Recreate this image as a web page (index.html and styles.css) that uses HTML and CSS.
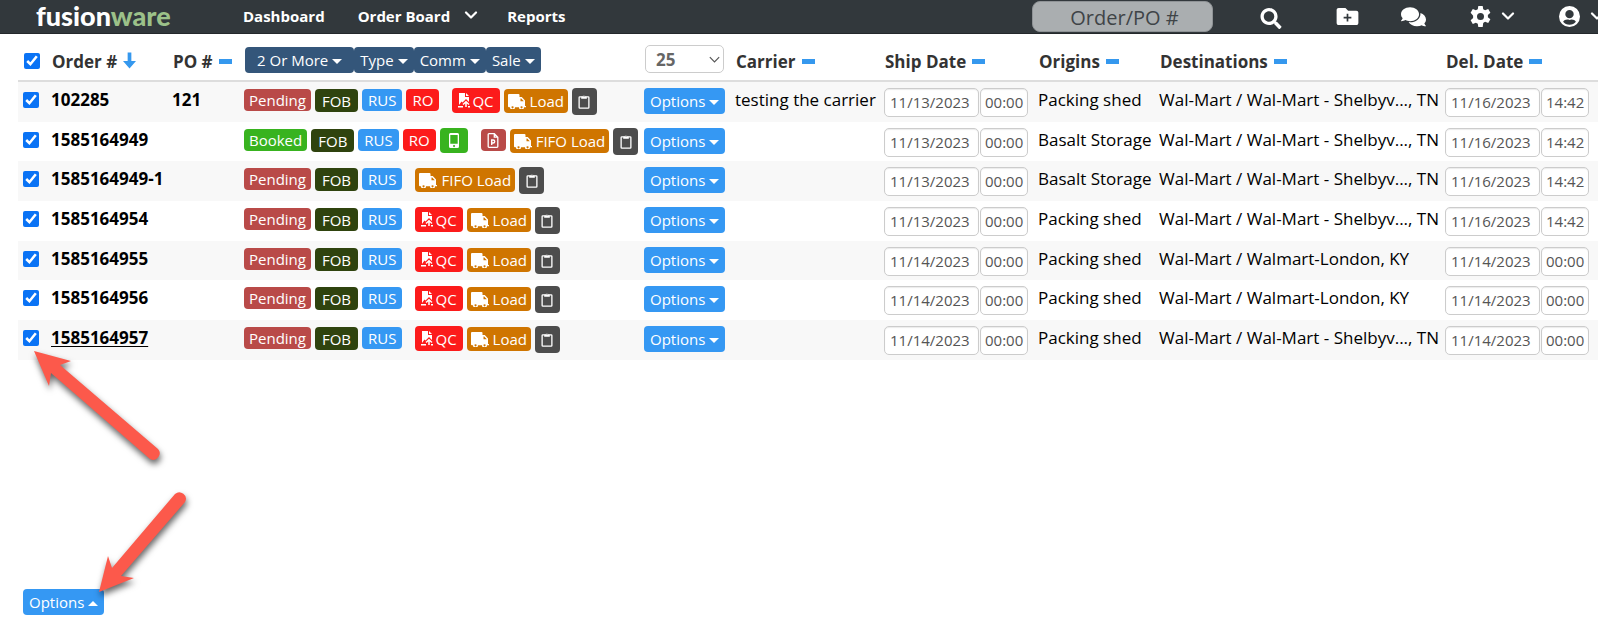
FILE: index.html
```html
<!DOCTYPE html>
<html lang="en">
<head>
<meta charset="utf-8">
<title>Fusionware Order Board</title>
<link rel="stylesheet" href="styles.css">
</head>
<body>
<svg class="sprite" aria-hidden="true">
  <symbol id="i-chev" viewBox="0 0 14 9"><path d="M2 1.500 7 6.500l5-5" fill="none" stroke="currentColor" stroke-width="2.200" stroke-linecap="round" stroke-linejoin="round"/></symbol>
  <symbol id="i-thin" viewBox="0 0 14 9"><path d="M1 1.500 7 7.500l6-6" fill="none" stroke="currentColor" stroke-width="1.500"/></symbol>
  <symbol id="i-search" viewBox="0 0 512 512"><path fill="currentColor" d="M505 442.700 405.300 343c-4.500-4.500-10.600-7-17-7H372c27.600-35.300 44-79.700 44-128C416 93.100 322.900 0 208 0S0 93.100 0 208s93.100 208 208 208c48.300 0 92.700-16.400 128-44v16.300c0 6.400 2.500 12.500 7 17l99.700 99.700c9.400 9.400 24.600 9.400 33.900 0l28.300-28.300c9.400-9.400 9.400-24.600.1-34zM208 336c-70.700 0-128-57.200-128-128 0-70.700 57.200-128 128-128 70.700 0 128 57.200 128 128 0 70.700-57.200 128-128 128z"/></symbol>
  <symbol id="i-folder" viewBox="0 0 512 400"><path fill="currentColor" fill-rule="evenodd" d="M464 64H272L208 0H48C21 0 0 21 0 48v304c0 27 21 48 48 48h416c27 0 48-21 48-48V112c0-27-21-48-48-48zM236 135h40v71h71v40h-71v71h-40v-71h-71v-40h71z"/></symbol>
  <symbol id="i-chat" viewBox="0 0 576 448"><path fill="currentColor" d="M416 160C416 71.600 322.900 0 208 0S0 71.600 0 160c0 34.300 14.100 65.900 38 92-13.400 30.200-35.500 54.200-35.800 54.500-2.200 2.300-2.800 5.700-1.500 8.700S4.800 320 8 320c36.600 0 66.900-12.300 88.700-25 32.200 15.700 70.300 25 111.300 25 114.900 0 208-71.600 208-160z"/><path fill="currentColor" d="M447 140c.8 6 1 13 1 20 0 106-108 192-240 192-11 0-21-1-32-2 31 58 105 98 192 98 41 0 80-9 111-25 22 13 52 25 89 25 8 0 9-8 6-12-8-10-24-26-36-54 24-26 38-58 38-92 0-67-53-124-129-150z" transform="translate(0 -8)"/></symbol>
  <symbol id="i-cog" viewBox="0 0 24 24"><path fill="currentColor" fill-rule="evenodd" d="M9.500 0h5l.6 3.700c.8.300 1.500.7 2.200 1.200l3.500-1.400 2.500 4.300-2.900 2.400a9 9 0 0 1 0 2.600l2.900 2.400-2.500 4.300-3.500-1.400c-.7.500-1.400.9-2.200 1.200L14.500 24h-5l-.6-3.700c-.8-.3-1.500-.7-2.200-1.200l-3.500 1.400-2.500-4.300 2.900-2.400a9 9 0 0 1 0-2.600L.7 7.800l2.500-4.300 3.500 1.400c.7-.5 1.400-.9 2.200-1.200zM12 8a4 4 0 1 0 0 8 4 4 0 0 0 0-8z"/></symbol>
  <symbol id="i-user" viewBox="0 0 24 24"><path fill="currentColor" fill-rule="evenodd" d="M12 0a12 12 0 1 0 0 24 12 12 0 0 0 0-24zm0 4.500a4.800 4.800 0 1 1 0 9.600 4.800 4.800 0 0 1 0-9.600zM12 21.500c-3 0-5.600-1.300-7.300-3.400 1-1.800 2.800-2.700 4.700-2.700.9 0 1.300.5 2.600.5s1.700-.5 2.600-.5c1.900 0 3.700.9 4.700 2.700-1.700 2.100-4.300 3.400-7.300 3.400z"/></symbol>
  <symbol id="i-down" viewBox="0 0 14 17"><path fill="currentColor" d="M5 0h4v9h5L7 17 0 9h5z"/></symbol>
  <symbol id="i-truck" viewBox="0 0 18 15"><path fill="currentColor" fill-rule="evenodd" d="M1 0h9.500q1 0 1 1v2h2.300L17 6.600V12h1v1.200h-2a2.500 2.500 0 0 1-5 0H7a2.500 2.500 0 0 1-5 0H1q-1 0-1-1V1q0-1 1-1zM12.500 4.400v2.900h3.300l-2.600-2.900z"/><path d="M4.500 12.200a1 1 0 1 0 .1 0zM13.500 12.200a1 1 0 1 0 .1 0z" fill="#cf7500"/></symbol>
  <symbol id="i-clip" viewBox="0 0 12 16"><path fill="none" stroke="currentColor" stroke-width="1.400" d="M3.500 3H1.500q-.7 0-.7.700v10.600q0 .8.700.8h9q.7 0 .7-.8V3.700q0-.7-.7-.7h-2"/><path fill="currentColor" fill-rule="evenodd" d="M3 5V2.500h1.500a1.600 1.600 0 0 1 3 0H9V5zM6 1.300a.7.700 0 1 0 .1 0z"/></symbol>
  <symbol id="i-qc" viewBox="0 0 12 15"><path fill="currentColor" d="M1 0h6v4h4v5L8 6 4.500 9.500 3.500 8.500 1 12zM8 0l3 3H8z"/><path fill="none" stroke="currentColor" stroke-width="1.500" d="M5 11.500 8 8.800l3 2.700M8 9.500V14"/><path fill="currentColor" d="M0 13h5v1.500H0zM10 13h2v1.500h-2z"/></symbol>
  <symbol id="i-phone" viewBox="0 0 10 15"><path fill="currentColor" fill-rule="evenodd" d="M1.500 0h7Q10 0 10 1.500v12Q10 15 8.500 15h-7Q0 15 0 13.500v-12Q0 0 1.500 0zM1.300 2v8.800h7.400V2zM5 12a1 1 0 1 0 .1 0z"/></symbol>
  <symbol id="i-pdf" viewBox="0 0 11 15"><path fill="none" stroke="currentColor" stroke-width="1.300" d="M.7 1.500q0-.8.800-.8h5.300l3.500 3.500v9.300q0 .8-.8.800h-8q-.8 0-.8-.8zM6.800.7v3.500h3.500"/><path fill="none" stroke="currentColor" stroke-width="1.400" d="M4.200 12V7h1.500a1.400 1.400 0 0 1 0 3H4.200"/></symbol>
</svg>

<header class="topbar">
  <a class="logo" href="#">fusion<span class="logo-alt">ware</span></a>
  <nav class="nav">
    <a href="#">Dashboard</a>
    <a href="#" class="nav-menu">Order Board <svg class="chev"><use href="#i-chev"/></svg></a>
    <a href="#">Reports</a>
  </nav>
  <input class="search" type="text" aria-label="Order or PO number" placeholder="Order/PO #">
  <div class="tools">
    <button aria-label="Search"><svg class="ic ic-search"><use href="#i-search"/></svg></button>
    <button aria-label="New folder"><svg class="ic ic-folder"><use href="#i-folder"/></svg></button>
    <button aria-label="Messages"><svg class="ic ic-chat"><use href="#i-chat"/></svg></button>
    <button aria-label="Settings"><svg class="ic ic-cog"><use href="#i-cog"/></svg><svg class="chev"><use href="#i-chev"/></svg></button>
    <button aria-label="Account"><svg class="ic ic-user"><use href="#i-user"/></svg><svg class="chev"><use href="#i-chev"/></svg></button>
  </div>
</header>

<main class="board">
<table class="orders">
  <colgroup><col class="c-check"><col class="c-order"><col class="c-po"><col class="c-tags"><col class="c-opts"><col class="c-carrier"><col class="c-ship"><col class="c-orig"><col class="c-dest"><col class="c-del"></colgroup>
  <thead>
    <tr>
      <th><input type="checkbox" checked aria-label="Select all orders"></th>
      <th><span class="head">Order # <svg class="sort-down"><use href="#i-down"/></svg></span></th>
      <th><span class="head">PO # <i class="dash"></i></span></th>
      <th><div class="filters"><button class="filter filter-wide">2 Or More<i class="caret"></i></button><button class="filter">Type<i class="caret"></i></button><button class="filter">Comm<i class="caret"></i></button><button class="filter">Sale<i class="caret"></i></button></div></th>
      <th><span class="pick"><select aria-label="Rows per page"><option>25</option></select><svg class="pick-chev"><use href="#i-thin"/></svg></span></th>
      <th><span class="head">Carrier <i class="dash"></i></span></th>
      <th><span class="head">Ship Date <i class="dash"></i></span></th>
      <th><span class="head">Origins <i class="dash"></i></span></th>
      <th><span class="head">Destinations <i class="dash"></i></span></th>
      <th><span class="head">Del. Date <i class="dash"></i></span></th>
    </tr>
  </thead>
  <tbody>
    <tr>
      <td><input type="checkbox" checked aria-label="Select 102285"></td>
      <td><a class="num" href="#">102285</a></td>
      <td><b class="num">121</b></td>
      <td><div class="tags"><span class="tag red">Pending</span><span class="tag fob">FOB</span><span class="tag blue">RUS</span><span class="tag hot">RO</span><button class="tag hot qc lead"><svg><use href="#i-qc"/></svg>QC</button><button class="tag load"><svg><use href="#i-truck"/></svg>Load</button><button class="tag clip" aria-label="Clipboard"><svg><use href="#i-clip"/></svg></button></div></td>
      <td><button class="options">Options<i class="caret"></i></button></td>
      <td><span class="txt">testing the carrier</span></td>
      <td><div class="when"><input class="date" aria-label="Ship date" value="11/13/2023"><input class="time" aria-label="Ship time" value="00:00"></div></td>
      <td><span class="txt">Packing shed</span></td>
      <td><span class="txt">Wal-Mart / Wal-Mart - Shelbyv..., TN</span></td>
      <td><div class="when"><input class="date" aria-label="Delivery date" value="11/16/2023"><input class="time" aria-label="Delivery time" value="14:42"></div></td>
    </tr>
    <tr>
      <td><input type="checkbox" checked aria-label="Select 1585164949"></td>
      <td><a class="num" href="#">1585164949</a></td>
      <td></td>
      <td><div class="tags"><span class="tag green">Booked</span><span class="tag fob">FOB</span><span class="tag blue">RUS</span><span class="tag hot">RO</span><button class="tag green phone" aria-label="Mobile"><svg><use href="#i-phone"/></svg></button><button class="tag red pdf lead" aria-label="PDF"><svg><use href="#i-pdf"/></svg></button><button class="tag load"><svg><use href="#i-truck"/></svg>FIFO Load</button><button class="tag clip" aria-label="Clipboard"><svg><use href="#i-clip"/></svg></button></div></td>
      <td><button class="options">Options<i class="caret"></i></button></td>
      <td></td>
      <td><div class="when"><input class="date" aria-label="Ship date" value="11/13/2023"><input class="time" aria-label="Ship time" value="00:00"></div></td>
      <td><span class="txt">Basalt Storage</span></td>
      <td><span class="txt">Wal-Mart / Wal-Mart - Shelbyv..., TN</span></td>
      <td><div class="when"><input class="date" aria-label="Delivery date" value="11/16/2023"><input class="time" aria-label="Delivery time" value="14:42"></div></td>
    </tr>
    <tr>
      <td><input type="checkbox" checked aria-label="Select 1585164949-1"></td>
      <td><a class="num" href="#">1585164949-1</a></td>
      <td></td>
      <td><div class="tags"><span class="tag red">Pending</span><span class="tag fob">FOB</span><span class="tag blue">RUS</span><button class="tag load lead"><svg><use href="#i-truck"/></svg>FIFO Load</button><button class="tag clip" aria-label="Clipboard"><svg><use href="#i-clip"/></svg></button></div></td>
      <td><button class="options">Options<i class="caret"></i></button></td>
      <td></td>
      <td><div class="when"><input class="date" aria-label="Ship date" value="11/13/2023"><input class="time" aria-label="Ship time" value="00:00"></div></td>
      <td><span class="txt">Basalt Storage</span></td>
      <td><span class="txt">Wal-Mart / Wal-Mart - Shelbyv..., TN</span></td>
      <td><div class="when"><input class="date" aria-label="Delivery date" value="11/16/2023"><input class="time" aria-label="Delivery time" value="14:42"></div></td>
    </tr>
    <tr>
      <td><input type="checkbox" checked aria-label="Select 1585164954"></td>
      <td><a class="num" href="#">1585164954</a></td>
      <td></td>
      <td><div class="tags"><span class="tag red">Pending</span><span class="tag fob">FOB</span><span class="tag blue">RUS</span><button class="tag hot qc lead"><svg><use href="#i-qc"/></svg>QC</button><button class="tag load"><svg><use href="#i-truck"/></svg>Load</button><button class="tag clip" aria-label="Clipboard"><svg><use href="#i-clip"/></svg></button></div></td>
      <td><button class="options">Options<i class="caret"></i></button></td>
      <td></td>
      <td><div class="when"><input class="date" aria-label="Ship date" value="11/13/2023"><input class="time" aria-label="Ship time" value="00:00"></div></td>
      <td><span class="txt">Packing shed</span></td>
      <td><span class="txt">Wal-Mart / Wal-Mart - Shelbyv..., TN</span></td>
      <td><div class="when"><input class="date" aria-label="Delivery date" value="11/16/2023"><input class="time" aria-label="Delivery time" value="14:42"></div></td>
    </tr>
    <tr>
      <td><input type="checkbox" checked aria-label="Select 1585164955"></td>
      <td><a class="num" href="#">1585164955</a></td>
      <td></td>
      <td><div class="tags"><span class="tag red">Pending</span><span class="tag fob">FOB</span><span class="tag blue">RUS</span><button class="tag hot qc lead"><svg><use href="#i-qc"/></svg>QC</button><button class="tag load"><svg><use href="#i-truck"/></svg>Load</button><button class="tag clip" aria-label="Clipboard"><svg><use href="#i-clip"/></svg></button></div></td>
      <td><button class="options">Options<i class="caret"></i></button></td>
      <td></td>
      <td><div class="when"><input class="date" aria-label="Ship date" value="11/14/2023"><input class="time" aria-label="Ship time" value="00:00"></div></td>
      <td><span class="txt">Packing shed</span></td>
      <td><span class="txt">Wal-Mart / Walmart-London, KY</span></td>
      <td><div class="when"><input class="date" aria-label="Delivery date" value="11/14/2023"><input class="time" aria-label="Delivery time" value="00:00"></div></td>
    </tr>
    <tr>
      <td><input type="checkbox" checked aria-label="Select 1585164956"></td>
      <td><a class="num" href="#">1585164956</a></td>
      <td></td>
      <td><div class="tags"><span class="tag red">Pending</span><span class="tag fob">FOB</span><span class="tag blue">RUS</span><button class="tag hot qc lead"><svg><use href="#i-qc"/></svg>QC</button><button class="tag load"><svg><use href="#i-truck"/></svg>Load</button><button class="tag clip" aria-label="Clipboard"><svg><use href="#i-clip"/></svg></button></div></td>
      <td><button class="options">Options<i class="caret"></i></button></td>
      <td></td>
      <td><div class="when"><input class="date" aria-label="Ship date" value="11/14/2023"><input class="time" aria-label="Ship time" value="00:00"></div></td>
      <td><span class="txt">Packing shed</span></td>
      <td><span class="txt">Wal-Mart / Walmart-London, KY</span></td>
      <td><div class="when"><input class="date" aria-label="Delivery date" value="11/14/2023"><input class="time" aria-label="Delivery time" value="00:00"></div></td>
    </tr>
    <tr>
      <td><input type="checkbox" checked aria-label="Select 1585164957"></td>
      <td><a class="num hovered" href="#">1585164957</a></td>
      <td></td>
      <td><div class="tags"><span class="tag red">Pending</span><span class="tag fob">FOB</span><span class="tag blue">RUS</span><button class="tag hot qc lead"><svg><use href="#i-qc"/></svg>QC</button><button class="tag load"><svg><use href="#i-truck"/></svg>Load</button><button class="tag clip" aria-label="Clipboard"><svg><use href="#i-clip"/></svg></button></div></td>
      <td><button class="options">Options<i class="caret"></i></button></td>
      <td></td>
      <td><div class="when"><input class="date" aria-label="Ship date" value="11/14/2023"><input class="time" aria-label="Ship time" value="00:00"></div></td>
      <td><span class="txt">Packing shed</span></td>
      <td><span class="txt">Wal-Mart / Wal-Mart - Shelbyv..., TN</span></td>
      <td><div class="when"><input class="date" aria-label="Delivery date" value="11/14/2023"><input class="time" aria-label="Delivery time" value="00:00"></div></td>
    </tr>
  </tbody>
</table>
</main>

<footer class="bulk"><button class="options">Options<i class="caret up"></i></button></footer>

<svg class="pointers" viewBox="0 0 200 622" aria-hidden="true">
  <path d="M34 351 71 361 60 365 158 449A6.500 6.500 0 0 1 150 459L51 373 49 386Z"/>
  <path d="M99 592 108 556 112 568 175 494A6.500 6.500 0 0 1 185 502L121 576 134 578Z"/>
</svg>
</body>
</html>
```

FILE: styles.css
```css
* { box-sizing: border-box; }

body {
  display: flex;
  flex-direction: column;
  min-height: 100vh;
  margin: 0;
  overflow: hidden;
  position: relative;
  background: #fff;
  color: #000;
  font-family: "Open Sans", "Noto Sans", sans-serif;
  font-size: 17px;
}

button, input, select { font-family: inherit; margin: 0; }
button { border: 0; cursor: pointer; white-space: nowrap; }
a { color: inherit; text-decoration: none; }
.sprite { display: none; }

/* Top bar */
.topbar {
  display: flex;
  align-items: center;
  height: 34px;
  padding-left: 36px;
  background: #32383c;
  border-bottom: 1px solid #24282b;
  color: #fff;
}
.logo {
  width: 207px;
  padding-bottom: 2px;
  font-family: Lato, sans-serif;
  font-size: 27px;
  font-weight: 900;
  line-height: 30px;
}
.logo-alt { color: #9cc189; }
.nav {
  display: flex;
  flex: 1;
  align-items: center;
  gap: 33px;
  padding-bottom: 2px;
  font-size: 15px;
  font-weight: 700;
  line-height: 30px;
}
.nav-menu { display: flex; align-items: center; gap: 14px; margin-right: -4px; }
.chev { width: 14px; height: 9px; }
.search {
  width: 181px;
  height: 31px;
  padding: 2px 0 0 4px;
  border: 1px solid #8f9396;
  border-radius: 8px;
  background: #aaaeb0;
  color: #32383c;
  font-size: 20px;
  text-align: center;
}
.search::placeholder { color: #3f4447; opacity: 1; }
.tools {
  display: flex;
  align-items: center;
  flex: none;
  width: 385px;
  padding-left: 47px;
  gap: 44px;
}
.tools button {
  display: flex;
  align-items: center;
  gap: 10px;
  padding: 0;
  background: none;
  color: #fff;
}
.ic { height: 21px; width: 21px; }
.ic-search { width: 22px; margin: 4px 10px 0 0; }
.ic-folder { width: 23px; height: 17px; margin-right: -2px; }
.ic-chat { width: 25px; height: 20px; }

/* Orders table */
.board { padding-left: 18px; }
.orders {
  width: 100%;
  border-collapse: separate;
  border-spacing: 0;
  table-layout: fixed;
}
.c-check { width: 33px; }
.c-order { width: 121px; }
.c-po { width: 72px; }
.c-tags { width: 400px; }
.c-opts { width: 91px; }
.c-carrier { width: 149px; }
.c-ship { width: 154px; }
.c-orig { width: 121px; }
.c-del { width: 153px; }

th, td { padding: 0; text-align: left; vertical-align: top; white-space: nowrap; }
th { height: 48px; border-bottom: 2px solid #ddd; color: #333; }
td { height: 40px; }
tbody tr:nth-child(3n+2) td { height: 39px; }
tbody tr:nth-child(odd) { background: #f8f8f8; }

input[type="checkbox"] {
  display: block;
  width: 16px;
  height: 16px;
  margin: 10px 0 0 5px;
  accent-color: #0a73f5;
}
th input[type="checkbox"] { margin: 19px 0 0 6px; }

.head {
  display: flex;
  align-items: center;
  gap: 6px;
  padding: 16px 0 0 1px;
  line-height: 24px;
}
.dash { width: 13px; height: 5px; margin-bottom: 1px; background: #3598ee; }
.sort-down { width: 13px; height: 17px; margin-bottom: 3px; color: #3598ee; }

.filters { display: flex; padding: 13px 0 0 1px; }
.filter, .options {
  display: flex;
  align-items: center;
  gap: 4px;
  height: 26px;
  padding: 0 6px;
  border-radius: 4px;
  color: #fff;
  font-size: 15px;
}
.filter { background: #34567a; }
.filter-wide { padding: 0 12px; }
.options { background: #3598f3; }
td .options { margin-top: 6px; }
.caret {
  border: 5px solid transparent;
  border-top-color: currentColor;
  border-bottom: 0;
  margin-top: 2px;
}
.caret.up { border-top: 0; border-bottom: 5px solid currentColor; }

.pick { display: grid; width: 79px; margin: 11px 0 0 1px; }
.pick select, .pick-chev { grid-area: 1 / 1; }
.pick select {
  height: 28px;
  padding: 0 10px;
  appearance: none;
  border: 1px solid #ccc;
  border-radius: 5px;
  background: #fff;
  color: #666;
  font-size: 17px;
  font-weight: 700;
}
.pick-chev {
  width: 11px;
  height: 7px;
  align-self: center;
  justify-self: end;
  margin-right: 4px;
  color: #555;
  pointer-events: none;
}

.num, .txt { display: block; line-height: 24px; padding-top: 6px; }
.num { font-weight: 700; }
.hovered { text-decoration: underline; text-underline-offset: 2px; }

.tags { display: flex; align-items: flex-start; gap: 4px; padding-top: 6px; }
.tag {
  display: flex;
  align-items: center;
  justify-content: center;
  gap: 4px;
  height: 22px;
  margin-top: 1px;
  padding: 0 6px;
  border-radius: 4px;
  color: #fff;
  font-size: 15px;
  line-height: 20px;
}
.lead { margin-left: 9px; }
.red, .green { padding: 0 5px; }
.red { background: #b94a48; }
.green { background: #38b31f; }
.fob { height: 23px; padding: 0 7px; background: #2f430e; }
.blue { background: #3598f3; }
.hot { background: #fc1b1b; }
.load { height: 24px; padding: 0 4px; background: #cf7500; }
.clip { width: 25px; height: 27px; margin-top: 0; background: #4d4d4d; }
.qc { gap: 2px; height: 25px; margin-top: 0; }
.phone { width: 28px; height: 25px; margin-top: 0; }
.pdf { width: 25px; }
.tag svg { flex: none; width: 18px; height: 15px; }
.qc svg { width: 12px; }
.clip svg, .phone svg, .pdf svg { width: 12px; }

.when { display: flex; gap: 1px; padding-top: 6px; }
.when input {
  height: 29px;
  padding: 0 5px 2px;
  border: 1px solid #ccc;
  border-radius: 5px;
  background: #fff;
  box-shadow: inset 0 1px 1px rgba(0, 0, 0, .08);
  color: #555;
  font-size: 15px;
}
.when .date { width: 95px; }
.when .time { width: 48px; padding: 0 2px 2px 4px; }

/* Bulk actions */
.bulk { display: flex; margin-top: auto; padding: 0 23px 7px; }

/* Callout arrows drawn over the page */
.pointers {
  position: absolute;
  left: 0;
  top: 0;
  width: 200px;
  height: 622px;
  pointer-events: none;
  fill: #fc594b;
  filter: drop-shadow(1px 4px 3px rgba(0, 0, 0, .6));
}
```
